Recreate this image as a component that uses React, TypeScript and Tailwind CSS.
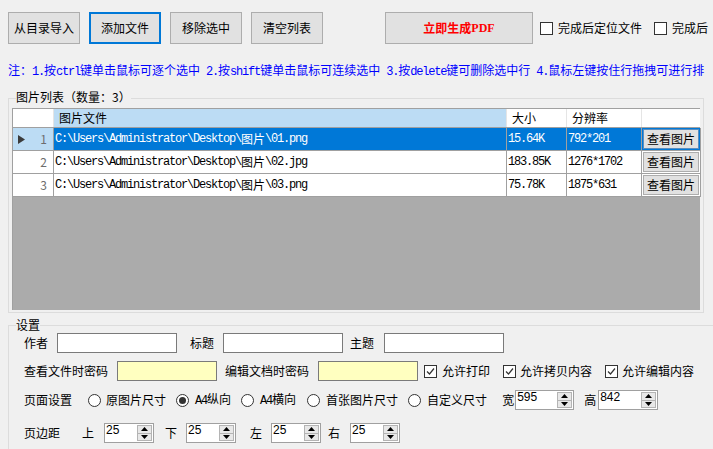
import { ReactNode } from "react";
import clsx from "clsx";

// mixed text: ASCII runs get a half-width mono face like the SimSun in the shot
function Mix({ text }: { text: string }) {
  const parts = text.split(/([\x00-\x7f]+)/).filter(Boolean);
  return (
    <>
      {parts.map((p, i) =>
        /^[\x00-\x7f]+$/.test(p) ? (
          <span key={i} className="font-['Liberation_Mono',monospace] text-[12px] tracking-[-1.2px] whitespace-pre">
            {p}
          </span>
        ) : (
          <span key={i}>{p}</span>
        )
      )}
    </>
  );
}

function Btn({ children, active, className }: { children: ReactNode; active?: boolean; className?: string }) {
  return (
    <div
      className={clsx(
        "flex h-[32px] w-[72px] shrink-0 items-center justify-center bg-[#e1e1e1] text-[12px] leading-[14px]",
        active ? "border-2 border-[#0078d7]" : "border border-[#adadad]",
        className
      )}
    >
      {children}
    </div>
  );
}

function Check({ checked, className }: { checked?: boolean; className?: string }) {
  return (
    <span className={clsx("flex h-[13px] w-[13px] shrink-0 items-center justify-center border border-[#333] bg-white", className)}>
      {checked && (
        <svg width="11" height="11" viewBox="0 0 11 11">
          <path d="M2 5.5 L4.5 8 L9 2.5" fill="none" stroke="#333" strokeWidth="1.2" />
        </svg>
      )}
    </span>
  );
}

function Radio({ checked, className }: { checked?: boolean; className?: string }) {
  return (
    <span className={clsx("flex h-[13px] w-[13px] shrink-0 items-center justify-center rounded-full border border-[#333] bg-white", className)}>
      {checked && <span className="h-[7px] w-[7px] rounded-full bg-[#333]" />}
    </span>
  );
}

function Spin({ value, className }: { value: string; className?: string }) {
  return (
    <div className={clsx("flex h-[20px] shrink-0 border border-[#a0a0a0] bg-white", className)}>
      <span className="flex-1 pl-[1px] font-['Liberation_Sans',sans-serif] text-[12px] leading-[13px]">{value}</span>
      <div className="my-[1px] mr-[1px] flex w-[15px] flex-col border border-[#b4b4b4] bg-[#e8e8e8]">
        <div className="flex flex-1 items-center justify-center border-b border-[#b4b4b4]">
          <svg width="7" height="4" viewBox="0 0 7 4">
            <polygon points="3.5,0 7,4 0,4" fill="#000" />
          </svg>
        </div>
        <div className="flex flex-1 items-center justify-center">
          <svg width="7" height="4" viewBox="0 0 7 4">
            <polygon points="0,0 7,0 3.5,4" fill="#000" />
          </svg>
        </div>
      </div>
    </div>
  );
}

const rows = [
  { n: "1", file: "C:\\Users\\Administrator\\Desktop\\图片\\01.png", size: "15.64K", res: "792*201" },
  { n: "2", file: "C:\\Users\\Administrator\\Desktop\\图片\\02.jpg", size: "183.85K", res: "1276*1702" },
  { n: "3", file: "C:\\Users\\Administrator\\Desktop\\图片\\03.png", size: "75.78K", res: "1875*631" },
];

export default function App() {
  return (
    <div className="relative h-[449px] w-[713px] overflow-hidden bg-[#f0f0f0] font-['Noto_Sans_CJK_SC',sans-serif] text-[12px] leading-[14px] text-black">
      {/* toolbar */}
      <div className="flex items-center whitespace-nowrap pl-[8px] pt-[12px]">
        <Btn>从目录导入</Btn>
        <Btn active className="ml-[9px]">添加文件</Btn>
        <Btn className="ml-[9px]">移除选中</Btn>
        <Btn className="ml-[9px]">清空列表</Btn>
        <Btn className="ml-[62px] !w-[148px] font-bold text-[#ff0000]">
          立即生成<span className="font-['Liberation_Serif',serif] text-[12px]">PDF</span>
        </Btn>
        <Check className="ml-[7px]" />
        <span className="ml-[5px]">完成后定位文件</span>
        <Check className="ml-[12px]" />
        <span className="ml-[5px]">完成后</span>
      </div>

      {/* hint */}
      <div className="mt-[19px] whitespace-nowrap pl-[8px] text-[#0000ff]">
        <Mix text="注：1.按ctrl键单击鼠标可逐个选中 2.按shift键单击鼠标可连续选中 3.按delete键可删除选中行 4.鼠标左键按住行拖拽可进行排" />
      </div>

      {/* image list group */}
      <div className="relative ml-[8px] mt-[19px] w-[696px] border border-[#dcdcdc] px-[3px] pb-[2px] pt-[9px]">
        <span className="absolute -top-[9px] left-[7px] bg-[#f0f0f0]">图片列表（数量：3）</span>
        <div className="flex h-[202px] flex-col border-l border-t border-[#a0a0a0] bg-[#ababab]">
          <div className="grid h-[19px] grid-cols-[41px_453px_60px_75px_59px] border-b border-[#a0a0a0] bg-white">
            <div className="border-r border-[#e5e5e5]" />
            <div className="flex items-center border-r border-[#e5e5e5] bg-[#bcdcf4] pl-[5px]">图片文件</div>
            <div className="flex items-center border-r border-[#e5e5e5] pl-[5px]">大小</div>
            <div className="flex items-center border-r border-[#e5e5e5] pl-[5px]">分辨率</div>
            <div />
          </div>
          {rows.map((r, i) => {
            const sel = i === 0;
            return (
              <div key={r.n} className="grid h-[23px] grid-cols-[41px_453px_60px_75px_59px]">
                <div className={clsx("relative flex items-center justify-end border-b border-r border-[#a0a0a0] pr-[6px] text-[#6d6d6d]", sel ? "bg-[#bcdcf4]" : "bg-white")}>
                  {sel && (
                    <svg className="absolute left-[5px] top-[7px]" width="8" height="9" viewBox="0 0 8 9">
                      <polygon points="0,0 7,4.5 0,9" fill="#3b3b3b" />
                    </svg>
                  )}
                  {r.n}
                </div>
                <div className={clsx("flex items-center whitespace-nowrap border-b border-r border-[#a0a0a0] pl-[1px]", sel ? "bg-[#0078d7] text-white" : "bg-white")}>
                  <Mix text={r.file} />
                </div>
                <div className={clsx("flex items-center border-b border-r border-[#a0a0a0] pl-[1px]", sel ? "bg-[#0078d7] text-white" : "bg-white")}>
                  <Mix text={r.size} />
                </div>
                <div className={clsx("flex items-center border-b border-r border-[#a0a0a0] pl-[1px]", sel ? "bg-[#0078d7] text-white" : "bg-white")}>
                  <Mix text={r.res} />
                </div>
                <div className={clsx("flex border-b border-r border-[#a0a0a0] p-[1px]", sel ? "bg-[#0078d7]" : "bg-white")}>
                  <div className={clsx("flex flex-1 items-center justify-center border bg-[#e1e1e1]", sel ? "border-[#5a8ec0]" : "border-[#adadad]")}>
                    查看图片
                  </div>
                </div>
              </div>
            );
          })}
        </div>
      </div>

      {/* settings group */}
      <div className="relative ml-[8px] mt-[12px] h-[200px] w-[720px] border border-[#dcdcdc] pt-[7px]">
        <span className="absolute -top-[8px] left-[7px] bg-[#f0f0f0]">设置</span>

        <div className="flex h-[20px] items-center whitespace-nowrap pl-[15px]">
          <span>作者</span>
          <div className="ml-[9px] h-[20px] w-[120px] border border-[#7a7a7a] bg-white" />
          <span className="ml-[13px]">标题</span>
          <div className="ml-[9px] h-[20px] w-[120px] border border-[#7a7a7a] bg-white" />
          <span className="ml-[7px]">主题</span>
          <div className="ml-[10px] h-[20px] w-[120px] border border-[#7a7a7a] bg-white" />
        </div>

        <div className="mt-[8px] flex h-[20px] items-center whitespace-nowrap pl-[15px]">
          <span>查看文件时密码</span>
          <div className="ml-[9px] h-[20px] w-[100px] border border-[#7a7a7a] bg-[#ffffc0]" />
          <span className="ml-[8px]">编辑文档时密码</span>
          <div className="ml-[9px] h-[20px] w-[100px] border border-[#7a7a7a] bg-[#ffffc0]" />
          <Check checked className="ml-[6px]" />
          <span className="ml-[5px]">允许打印</span>
          <Check checked className="ml-[13px]" />
          <span className="ml-[4px]">允许拷贝内容</span>
          <Check checked className="ml-[13px]" />
          <span className="ml-[4px]">允许编辑内容</span>
        </div>

        <div className="mt-[9px] flex h-[20px] items-center whitespace-nowrap pl-[15px]">
          <span>页面设置</span>
          <Radio className="ml-[16px]" />
          <span className="ml-[5px]">原图片尺寸</span>
          <Radio checked className="ml-[10px]" />
          <span className="ml-[6px]"><Mix text="A4纵向" /></span>
          <Radio className="ml-[10px]" />
          <span className="ml-[6px]"><Mix text="A4横向" /></span>
          <Radio className="ml-[11px]" />
          <span className="ml-[6px]">首张图片尺寸</span>
          <Radio className="ml-[10px]" />
          <span className="ml-[6px]">自定义尺寸</span>
          <span className="ml-[15px]">宽</span>
          <Spin value="595" className="ml-[1px] w-[59px]" />
          <span className="ml-[10px]">高</span>
          <Spin value="842" className="ml-[2px] w-[60px]" />
        </div>

        <div className="mt-[13px] flex h-[20px] items-center whitespace-nowrap pl-[15px]">
          <span>页边距</span>
          <span className="ml-[22px]">上</span>
          <Spin value="25" className="ml-[10px] w-[50px]" />
          <span className="ml-[11px]">下</span>
          <Spin value="25" className="ml-[9px] w-[50px]" />
          <span className="ml-[14px]">左</span>
          <Spin value="25" className="ml-[9px] w-[50px]" />
          <span className="ml-[7px]">右</span>
          <Spin value="25" className="ml-[10px] w-[50px]" />
        </div>
      </div>
    </div>
  );
}
